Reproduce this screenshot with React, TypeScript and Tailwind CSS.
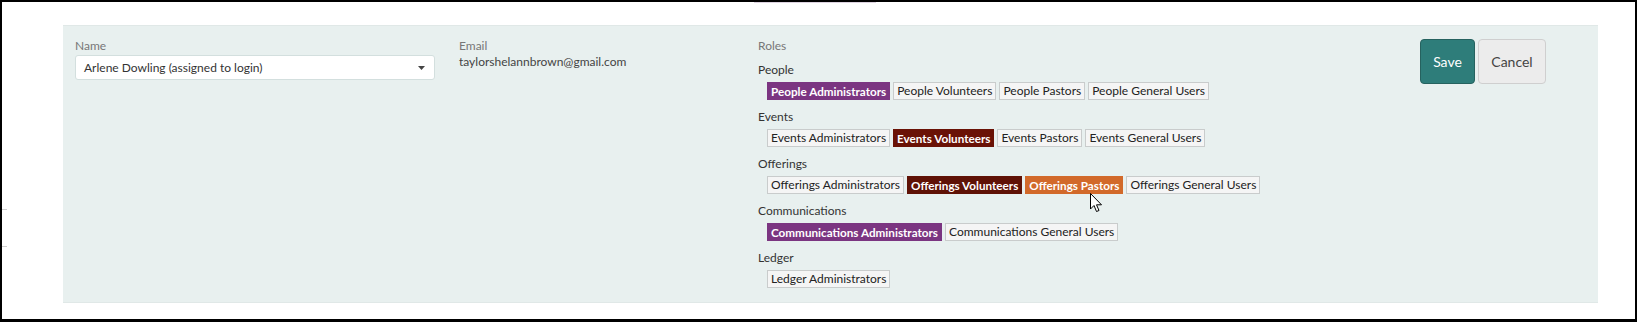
import React from "react";

type Role = { name: string; color?: string };
type Group = { title: string; roles: Role[] };

const groups: Group[] = [
  {
    title: "People",
    roles: [
      { name: "People Administrators", color: "bg-[#7b3581] border-[#7b3581]" },
      { name: "People Volunteers" },
      { name: "People Pastors" },
      { name: "People General Users" },
    ],
  },
  {
    title: "Events",
    roles: [
      { name: "Events Administrators" },
      { name: "Events Volunteers", color: "bg-[#6a1206] border-[#6a1206]" },
      { name: "Events Pastors" },
      { name: "Events General Users" },
    ],
  },
  {
    title: "Offerings",
    roles: [
      { name: "Offerings Administrators" },
      { name: "Offerings Volunteers", color: "bg-[#5f1206] border-[#5f1206]" },
      { name: "Offerings Pastors", color: "bg-[#d2692a] border-[#d2692a]" },
      { name: "Offerings General Users" },
    ],
  },
  {
    title: "Communications",
    roles: [
      { name: "Communications Administrators", color: "bg-[#7b3581] border-[#7b3581]" },
      { name: "Communications General Users" },
    ],
  },
  {
    title: "Ledger",
    roles: [{ name: "Ledger Administrators" }],
  },
];

function Badge({ role }: { role: Role }) {
  if (role.color) {
    return (
      <span className={`h-[18px] px-[3px] border text-[11.7px] leading-4 font-bold text-white ${role.color}`}>
        {role.name}
      </span>
    );
  }
  return (
    <span className="h-[18px] px-[3px] border border-[#c9cccc] bg-[#f5f5f5] text-[12px] leading-4 text-[#222]">
      {role.name}
    </span>
  );
}

export default function App() {
  return (
    <div className="relative w-[1637px] h-[322px] bg-white border-black border-t-2 border-x-2 border-b-[3px] font-['Lato','Open_Sans',sans-serif]">
      {/* bits of the page behind the frame */}
      <div className="absolute top-0 left-[752px] w-[122px] h-px bg-[#ddd3e0]" />
      <div className="absolute top-[207px] left-0 w-[5px] h-px bg-[#cfcfcf]" />
      <div className="absolute top-[244px] left-0 w-[5px] h-px bg-[#cfcfcf]" />

      <div className="ml-[61px] mt-[23px] w-[1535px] h-[278px] bg-[#e8f0ef] border-t border-b border-[#e0e8e7] flex pl-3 pr-[52px] pt-[12px]">
        <div className="w-[384px]">
          <div className="text-[12px] leading-4 text-[#777]">Name</div>
          <div className="mt-px w-[360px] h-[25px] bg-white border border-[#d3dfde] rounded-[3px] flex items-center justify-between pl-2 pr-[9px]">
            <span className="text-[12px] text-[#333]">Arlene Dowling (assigned to login)</span>
            <svg width="7" height="4" viewBox="0 0 7 4">
              <path d="M0 0h7L3.5 4z" fill="#444" />
            </svg>
          </div>
        </div>

        <div className="w-[299px]">
          <div className="text-[12px] leading-4 text-[#777]">Email</div>
          <div className="text-[12px] leading-4 text-[#444]">taylorshelannbrown@gmail.com</div>
        </div>

        <div className="flex-1">
          <div className="text-[12px] leading-4 text-[#777]">Roles</div>
          <div className="mt-2 flex flex-col gap-[9px]">
            {groups.map((g) => (
              <div key={g.title}>
                <div className="text-[12px] leading-4 text-[#333]">{g.title}</div>
                <div className="mt-1 ml-[9px] flex gap-[3px]">
                  {g.roles.map((r) => (
                    <Badge key={r.name} role={r} />
                  ))}
                </div>
              </div>
            ))}
          </div>
        </div>

        <div className="flex gap-[3px] pt-px">
          <button className="w-[55px] h-[45px] rounded-[4px] bg-[#2e7d7a] border border-[#26625f] text-white text-[14px]">
            Save
          </button>
          <button className="w-[68px] h-[45px] rounded-[4px] bg-[#ececec] border border-[#cfcfcf] text-[#444] text-[14px]">
            Cancel
          </button>
        </div>
      </div>

      {/* mouse pointer */}
      <svg className="absolute left-[1088px] top-[191px]" width="13" height="20" viewBox="0 0 13 20">
        <path
          d="M0.5 0.5 L0.5 16 L4 12.5 L6.5 18.5 L9 17.5 L6.5 11.8 L11.5 11.8 Z"
          fill="white"
          stroke="black"
          strokeWidth="1"
          strokeLinejoin="round"
        />
      </svg>
    </div>
  );
}
